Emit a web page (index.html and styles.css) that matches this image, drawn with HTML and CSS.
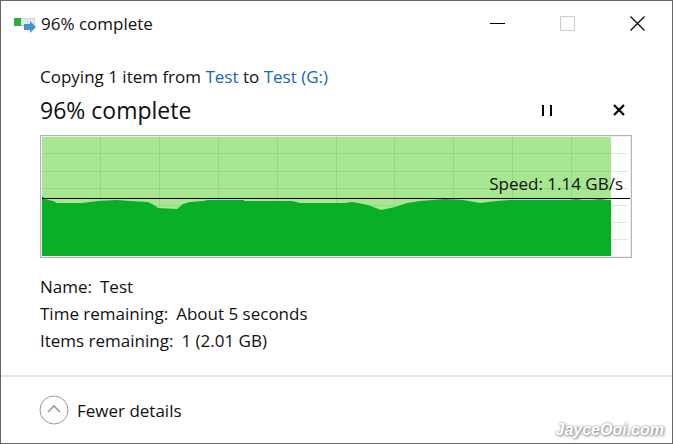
FILE: index.html
```html
<!DOCTYPE html>
<html lang="en">
<head>
  <meta charset="UTF-8" />
  <meta name="viewport" content="width=device-width, initial-scale=1.0" />
  <title>96% complete</title>
  <link rel="stylesheet" href="styles.css">
</head>
<body>
  <div class="window">
    <header class="titlebar">
      <svg class="app-icon" width="22" height="22" viewBox="0 -6 22 22" aria-hidden="true">
        <rect x="0.5" y="0.5" width="20" height="7" fill="#e4e6e8" stroke="#d2d4d6" />
        <rect x="0" y="0" width="7" height="8" fill="#2fae38" />
        <path d="M10 6h6V3l6 6-6 6v-3h-6z" fill="#3d96dc" />
      </svg>
      <span class="title">96% complete</span>
      <div class="window-buttons">
        <button type="button" aria-label="Minimize">
          <svg width="15" height="15" viewBox="0 0 15 15"><path d="M0 7.500h15" stroke="#000" /></svg>
        </button>
        <button type="button" aria-label="Maximize" disabled>
          <svg width="15" height="15" viewBox="0 0 15 15"><path d="M.5.5h14v14H.5z" fill="none" stroke="#ccc" /></svg>
        </button>
        <button type="button" aria-label="Close">
          <svg width="15" height="15" viewBox="0 0 15 15"><path d="M.5.5l14 14M14.500.5l-14 14" stroke="#000" stroke-width="1.200" /></svg>
        </button>
      </div>
    </header>

    <main class="content">
      <p class="summary">Copying 1 item from <a href="#">Test</a> to <a href="#">Test (G:)</a></p>

      <div class="status">
        <h1>96% complete</h1>
        <div class="actions">
          <button type="button" aria-label="Pause">
            <svg width="12" height="12" viewBox="0 0 12 12"><path d="M2 1v11M10 1v11" stroke="#000" stroke-width="2" /></svg>
          </button>
          <button type="button" aria-label="Cancel">
            <svg width="12" height="12" viewBox="0 0 12 12"><path d="M1 1l10 10M11 1L1 11" stroke="#000" stroke-width="2.200" /></svg>
          </button>
        </div>
      </div>

      <div class="chart">
        <svg viewBox="0 0 588 119" preserveAspectRatio="none" aria-hidden="true">
          <!-- finished part -->
          <rect width="569" height="119" fill="#a8e692" />
          <!-- grid -->
          <path d="M58.500 0v119M117.500 0v119M176.500 0v119M235.500 0v119M294.500 0v119M352.500 0v119M411.500 0v119M470.500 0v119M529.500 0v119" stroke="#90da84" />
          <path d="M0 16.500h569M0 34.500h569M0 51.500h569M0 68.500h569" stroke="#90da84" />
          <path d="M569 16.500h17M569 34.500h17M569 51.500h17M569 68.500h17M569 85.500h17M569 102.500h17" stroke="#d3edd8" />
          <!-- transfer speed -->
          <path d="M0 119V59L3 62 11 64 15 66H40L48 65 56 64 75 63 88 64 106 65 112 68 116 71 135 72 141 67 148 65 161 64 166 63H201L203 64H250L258 66H303L310 65 316 66 326 68 339 73 353 70 365 66 378 64 391 63 403 62 421 63 438 66 455 64 468 63H528L534 62 541 63H550L558 62 565 63H569V119z" fill="#09b026" />
          <path d="M0 61.500h588" stroke="#000" />
        </svg>
        <span class="speed">Speed: 1.14 GB/s</span>
      </div>

      <dl class="details">
        <div><dt>Name:</dt><dd>Test</dd></div>
        <div><dt>Time remaining:</dt><dd>About 5 seconds</dd></div>
        <div><dt>Items remaining:</dt><dd>1 (2.01 GB)</dd></div>
      </dl>
    </main>

    <footer class="footer">
      <button type="button" class="toggle">
        <svg width="30" height="30" viewBox="0 0 30 30" aria-hidden="true">
          <circle cx="15" cy="15" r="14" fill="none" stroke="#999" />
          <path d="M9 17l6-6 6 6" fill="none" stroke="#999" stroke-width="1.600" />
        </svg>
        Fewer details
      </button>
      <span class="watermark">JayceOoi.com</span>
    </footer>
  </div>
</body>
</html>
```

FILE: styles.css
```css
* {
  box-sizing: border-box;
}

body {
  margin: 0;
  font-family: "Segoe UI", "Open Sans", "Noto Sans", sans-serif;
  font-size: 17px;
  line-height: 27px;
  color: #111;
  background: #fff;
}

.window {
  display: flex;
  flex-direction: column;
  min-height: 100vh;
  border: 1px solid #666;
}

button {
  display: flex;
  align-items: center;
  justify-content: center;
  padding: 0;
  border: none;
  background: none;
  font: inherit;
  color: inherit;
}

.titlebar {
  display: flex;
  align-items: center;
  height: 44px;
  padding-left: 13px;
}

.title {
  margin-left: 5px;
}

.window-buttons {
  display: flex;
  margin-left: auto;
}

.window-buttons button {
  width: 70px;
  height: 44px;
}

.content {
  padding: 18px 40px 0 39px;
}

.summary {
  margin: 0;
}

a {
  color: #1766c2;
  text-decoration: none;
}

.status {
  display: flex;
  align-items: center;
  justify-content: space-between;
  height: 40px;
}

h1 {
  margin: 0;
  font-size: 23px;
  font-weight: normal;
}

.actions {
  display: flex;
  gap: 48px;
  padding-right: 1px;
}

.actions button {
  width: 24px;
  height: 24px;
}

.chart {
  position: relative;
  margin-top: 5px;
  padding: 1px;
  border: 1px solid #b4b4b4;
  background: #eee;
}

.chart svg {
  display: block;
  width: 100%;
  height: 119px;
  background: #fff;
}

/* label sits over the graph, just above the speed line */
.speed {
  position: absolute;
  top: 34px;
  right: 8px;
}

.details {
  margin: 15px 0 21px;
}

.details div {
  display: flex;
  gap: 8px;
}

.details dd {
  margin: 0;
}

.footer {
  display: flex;
  flex: 1;
  align-items: center;
  justify-content: space-between;
  padding: 0 8px 0 38px;
  border-top: 2px solid #e3e3e3;
}

.toggle {
  gap: 8px;
}

.watermark {
  align-self: flex-end;
  font-family: "Liberation Sans", Arial, sans-serif;
  font-size: 16px;
  font-style: italic;
  font-weight: bold;
  color: #fff;
  text-shadow: 0 0 2px #888, 1px 1px 3px #888;
}
```
